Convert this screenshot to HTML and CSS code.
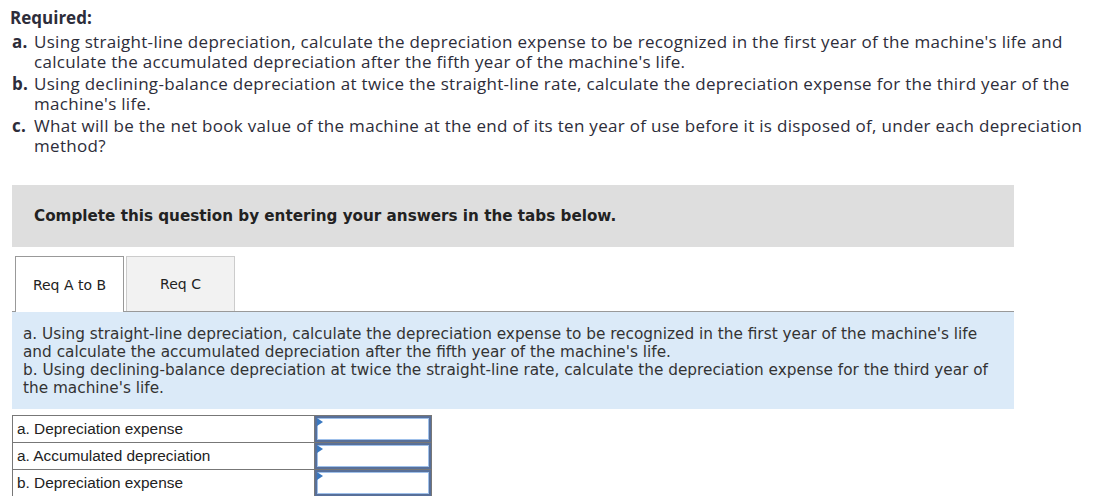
FILE: index.html
```html
<!DOCTYPE html>
<html lang="en">
<head>
    <meta charset="UTF-8">
    <title>Depreciation question</title>
    <link rel="stylesheet" href="styles.css">
</head>
<body>
    <div class="required">
        <div class="req-title">Required:</div>
        <ol class="req-list">
            <li><b>a.</b><span>Using straight-line depreciation, calculate the depreciation expense to be recognized in the first year of the machine's life and calculate the accumulated depreciation after the fifth year of the machine's life.</span></li>
            <li><b>b.</b><span>Using declining-balance depreciation at twice the straight-line rate, calculate the depreciation expense for the third year of the machine's life.</span></li>
            <li><b>c.</b><span>What will be the net book value of the machine at the end of its ten year of use before it is disposed of, under each depreciation method?</span></li>
        </ol>
    </div>

    <div class="question">
        <div class="notice">Complete this question by entering your answers in the tabs below.</div>

        <!-- tabs -->
        <div class="tabs">
            <div class="tab active">Req A to B</div>
            <div class="tab">Req C</div>
        </div>

        <div class="panel">
            a. Using straight-line depreciation, calculate the depreciation expense to be recognized in the first year of the machine's life and calculate the accumulated depreciation after the fifth year of the machine's life.<br>
            b. Using declining-balance depreciation at twice the straight-line rate, calculate the depreciation expense for the third year of the machine's life.
        </div>

        <table class="answers">
            <tr>
                <td class="label">a. Depreciation expense</td>
                <td class="cell"><input type="text"></td>
            </tr>
            <tr>
                <td class="label">a. Accumulated depreciation</td>
                <td class="cell"><input type="text"></td>
            </tr>
            <tr>
                <td class="label">b. Depreciation expense</td>
                <td class="cell"><input type="text"></td>
            </tr>
        </table>
    </div>
</body>
</html>
```

FILE: styles.css
```css
body {
    margin: 0;
    padding: 8px 12px 0 12px;
    background-color: #fff;
}
.required {
    font-family: "Open Sans", Lato, sans-serif;
    font-size: 17px;
    letter-spacing: 0.3px;
    color: #2d2d3a;
    line-height: 20px;
}
.req-title {
    font-weight: bold;
    margin-left: -2px;
    letter-spacing: 0;
}
.req-list {
    list-style: none;
    margin: 4px 0 0 0;
    padding: 0;
    width: 1085px;
}
.req-list li {
    display: flex;
    margin-top: 2px;
}
.req-list li:first-child {
    margin-top: 0;
}
.req-list li b {
    width: 22px;
    flex-shrink: 0;
}
.question {
    width: 1002px;
}
.notice {
    margin-top: 29px;
    height: 62px;
    background-color: #dedede;
    padding-left: 22px;
    display: flex;
    align-items: center;
    font-family: "DejaVu Sans", Verdana, sans-serif;
    font-weight: bold;
    font-size: 15.2px;
    color: #222;
}
.tabs {
    display: flex;
    gap: 2px;
    margin-top: 9px;
    padding-left: 3px;
    border-bottom: 1px solid #999;
}
.tab {
    width: 107px;
    height: 54px;
    display: flex;
    align-items: center;
    justify-content: center;
    font-family: "DejaVu Sans", Verdana, sans-serif;
    font-size: 14px;
    color: #222;
    background-color: #f2f2f2;
    border: 1px solid #ccc;
    border-bottom: none;
    margin-bottom: -1px;
}
.tab.active {
    background-color: #fff;
    border-color: #999;
    height: 55px;
}
.panel {
    background-color: #dbeaf8;
    padding: 13px 11px 12px 11px;
    font-family: "DejaVu Sans", Verdana, sans-serif;
    font-size: 15.3px;
    line-height: 18px;
    color: #333;
}
.answers {
    margin-top: 6px;
    border-collapse: collapse;
    font-family: "Liberation Sans", Arial, sans-serif;
    font-size: 15.4px;
    color: #222;
}
.answers td {
    border: 1px solid #777;
    height: 26px;
    padding: 0;
}
.answers td.label {
    width: 297px;
    padding-left: 4px;
}
.answers td.cell {
    width: 116px;
    position: relative;
}
.answers input {
    display: block;
    box-sizing: border-box;
    width: 116px;
    height: 26px;
    border: 2px solid #58709a;
    outline: 1px solid #9fc0ea;
    outline-offset: -3px;
    margin: 0;
}
.answers td.cell::before {
    content: "";
    position: absolute;
    left: 2px;
    top: 2px;
    border-top: 4px solid transparent;
    border-bottom: 4px solid transparent;
    border-left: 6px solid #3a78c0;
}
```
